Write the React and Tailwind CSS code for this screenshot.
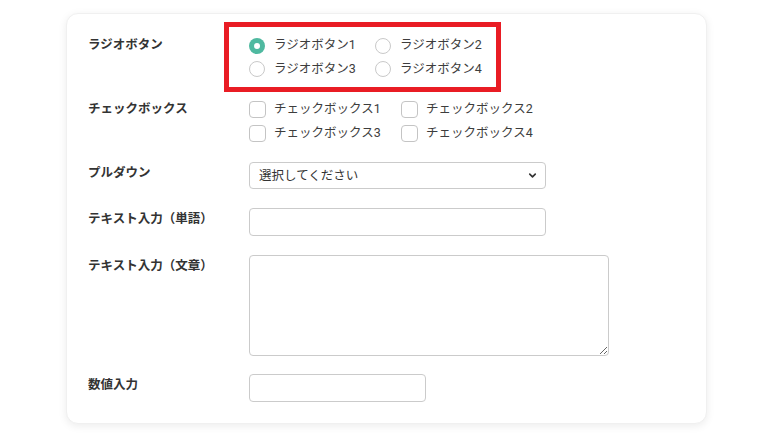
import { ChevronDown } from "lucide-react";

const font = { fontFamily: "Roboto, 'Noto Sans CJK JP', sans-serif" };

function Radio({ checked, label }) {
  return (
    <div className="flex items-center">
      {checked ? (
        <span className="w-4 h-4 rounded-full bg-[#4fb9a0] flex items-center justify-center">
          <span className="w-[6px] h-[6px] rounded-full bg-white" />
        </span>
      ) : (
        <span className="w-4 h-4 rounded-full border border-[#c9c9c9] bg-white" />
      )}
      <span className="ml-[9px] text-[12.5px] text-[#3d3d3d]">{label}</span>
    </div>
  );
}

function Check({ label }) {
  return (
    <div className="flex items-center">
      <span className="w-[17px] h-[17px] rounded-[4px] border border-[#c4c4c4] bg-white" />
      <span className="ml-2 text-[12.5px] text-[#3d3d3d]">{label}</span>
    </div>
  );
}

function Row({ label, className = "", children }) {
  return (
    <div className={`flex ${className}`}>
      <div className="w-[161px] shrink-0 pt-[2px] text-[12.5px] leading-[18px] font-bold text-[#333]">
        {label}
      </div>
      <div>{children}</div>
    </div>
  );
}

export default function App() {
  return (
    <div className="min-h-screen bg-white pt-[13px]" style={font}>
      <div className="ml-[66px] w-[641px] h-[411px] rounded-[12px] bg-white border border-[#f0f0f0] shadow-[0_2px_8px_rgba(0,0,0,0.08)] pt-[20px] pl-[21px]">
        <Row label="ラジオボタン">
          <div className="relative grid grid-cols-[126px_auto] auto-rows-[23.5px] items-center w-fit">
            <Radio checked label="ラジオボタン1" />
            <Radio label="ラジオボタン2" />
            <Radio label="ラジオボタン3" />
            <Radio label="ラジオボタン4" />
            <div className="absolute left-[-25px] top-[-12px] w-[277px] h-[70px] border-[5px] border-[#e91c24]" />
          </div>
        </Row>

        <Row label="チェックボックス" className="mt-[17px]">
          <div className="grid grid-cols-[152px_auto] auto-rows-[23.7px] items-center w-fit">
            <Check label="チェックボックス1" />
            <Check label="チェックボックス2" />
            <Check label="チェックボックス3" />
            <Check label="チェックボックス4" />
          </div>
        </Row>

        <Row label="プルダウン" className="mt-[17px]">
          <div className="relative w-[297px] h-[27px]">
            <select className="appearance-none w-full h-full rounded-[4px] border border-[#cbcbcb] bg-white pl-[9px] text-[12.5px] text-[#333] outline-none">
              <option>選択してください</option>
            </select>
            <ChevronDown
              size={11}
              strokeWidth={3.5}
              className="absolute right-[8px] top-[8px] text-[#333] pointer-events-none"
            />
          </div>
        </Row>

        <Row label="テキスト入力（単語）" className="mt-[19px]">
          <input
            type="text"
            className="block w-[297px] h-[28px] rounded-[4px] border border-[#cbcbcb] bg-white outline-none"
          />
        </Row>

        <Row label="テキスト入力（文章）" className="mt-[19px]">
          <textarea className="block w-[360px] h-[101px] rounded-[4px] border border-[#cbcbcb] bg-white outline-none" />
        </Row>

        <Row label="数値入力" className="mt-[18px]">
          <input
            type="number"
            className="block w-[177px] h-[28px] rounded-[4px] border border-[#cbcbcb] bg-white outline-none"
          />
        </Row>
      </div>
    </div>
  );
}
